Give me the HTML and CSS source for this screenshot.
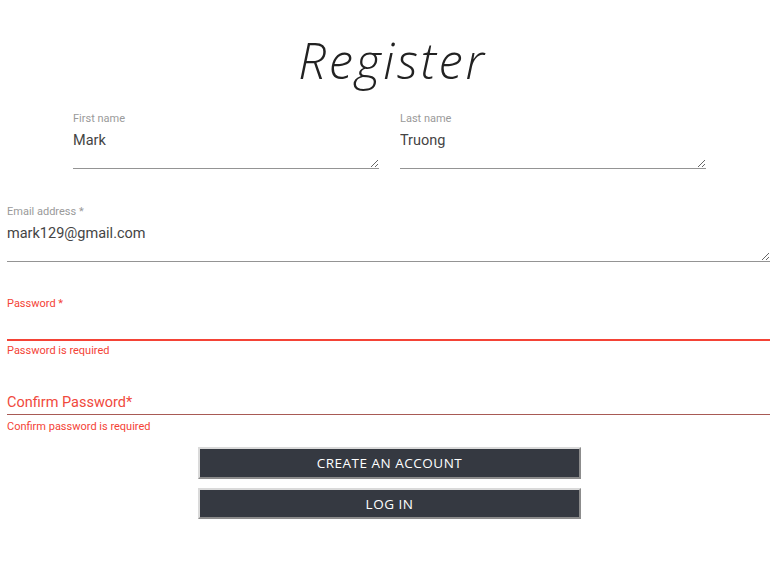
FILE: index.html
```html
<!DOCTYPE html>
<html lang="en">
<head>
<meta charset="utf-8">
<title>Register</title>
<link rel="stylesheet" href="styles.css">
</head>
<body>
<form class="register">
  <h1 class="title">Register</h1>
  <div class="name-row">
    <div class="field">
      <label class="label" for="first">First name</label>
      <textarea id="first" class="area">Mark</textarea>
    </div>
    <div class="field">
      <label class="label" for="last">Last name</label>
      <textarea id="last" class="area">Truong</textarea>
    </div>
  </div>
  <div class="field email">
    <label class="label" for="email">Email address *</label>
    <textarea id="email" class="area">mark129@gmail.com</textarea>
  </div>
  <div class="field password">
    <label class="label error-label" for="pw">Password *</label>
    <input id="pw" class="input input-error" type="password">
    <div class="error">Password is required</div>
  </div>
  <div class="field confirm">
    <input class="input input-confirm" type="password" placeholder="Confirm Password*">
    <div class="error">Confirm password is required</div>
  </div>
  <div class="actions">
    <button type="button" class="btn btn-first">CREATE AN ACCOUNT</button>
    <button type="button" class="btn">LOG IN</button>
  </div>
</form>
</body>
</html>
```
FILE: styles.css
```css
* { box-sizing: border-box; }
html, body { margin: 0; padding: 0; background: #fff; }
body { font-family: Roboto, "Liberation Sans", sans-serif; }

.register {
  padding: 0 5px 0 7px;
  display: flex;
  flex-direction: column;
}

.title {
  margin: 30px 0 0 0;
  padding-left: 8px;
  height: 60px;
  line-height: 60px;
  text-align: center;
  font-family: "Open Sans", sans-serif;
  font-style: italic;
  font-weight: 300;
  font-size: 49px;
  color: #222;
  letter-spacing: 2.6px;
}

.name-row {
  margin: 22px auto 0 auto;
  width: 633px;
  display: grid;
  grid-template-columns: 306px 306px;
  column-gap: 21px;
  position: relative;
  left: 1px;
}

.field { display: flex; flex-direction: column; }

.label {
  display: block;
  font-size: 11px;
  line-height: 14px;
  color: #9a9a9a;
}

.area {
  display: block;
  width: 100%;
  height: 43px;
  margin: 0;
  padding: 6px 0 0 0;
  border: none;
  border-bottom: 1px solid #949494;
  outline: none;
  font-family: Roboto, "Liberation Sans", sans-serif;
  font-size: 14.5px;
  line-height: 18px;
  color: #444;
  background: transparent;
  overflow: hidden;
}

.email { margin-top: 36px; }

.password { margin-top: 35px; }

.error-label { color: #f44336; }

.input {
  display: block;
  width: 100%;
  margin: 0;
  border: none;
  outline: none;
  background: transparent;
  font-family: Roboto, "Liberation Sans", sans-serif;
  font-size: 14.5px;
  line-height: 18px;
  color: #444;
}

.input-error {
  height: 30px;
  padding: 0;
  border-bottom: 2px solid #f44336;
}

.error {
  margin-top: 3px;
  font-size: 11px;
  line-height: 14px;
  color: #f44336;
}

.confirm { margin-top: 28px; }

.input-confirm {
  height: 29px;
  padding: 7px 0 3px 0;
  border-bottom: 1px solid #a85a55;
}
.input-confirm::placeholder { color: #f0493c; opacity: 1; }

.confirm .error { margin-top: 5px; }

.actions {
  margin-top: 13px;
  display: flex;
  flex-direction: column;
  align-items: center;
  gap: 9px;
  position: relative;
  left: 1px;
}

.btn {
  width: 383px;
  height: 32px;
  margin: 0;
  padding: 0;
  background: #353941;
  color: #ffffff;
  font-family: "Open Sans", sans-serif;
  font-size: 13.5px;
  font-weight: 500;
  letter-spacing: 0.5px;
  border-style: solid;
  border-width: 2px;
  border-color: #dadada #8c8c8c #8c8c8c #dadada;
  cursor: pointer;
}
.btn-first + .btn { height: 31px; }
```
